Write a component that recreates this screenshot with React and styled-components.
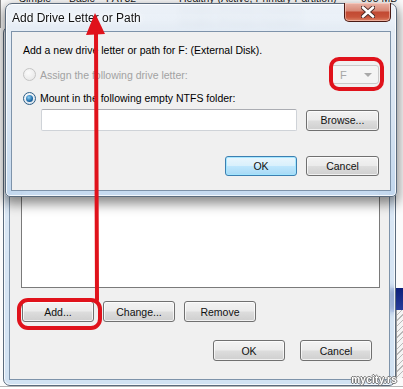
import React from "react";
import styled, { createGlobalStyle, css } from "styled-components";

const GlobalStyle = createGlobalStyle`
  html, body { margin: 0; padding: 0; }
  body {
    width: 403px;
    height: 389px;
    overflow: hidden;
    background: #ffffff;
    font-family: "Liberation Sans", Arial, sans-serif;
  }
`;

const Desktop = styled.div`
  position: relative;
  width: 403px;
  height: 389px;
  overflow: hidden;
  background: #fbfbfb;
`;

/* Disk Management list view sitting behind both dialogs */
const ListView = styled.div`
  position: absolute;
  left: 0;
  top: -8px;
  width: 403px;
  border-left: 1px solid #8c8c8c;
`;

const ListRow = styled.div`
  display: grid;
  grid-template-columns: 50px 37px 73px 182px 1fr;
  padding-left: 18px;
  height: 12px;
  font-size: 10.5px;
  line-height: 12px;
  color: ${(p) => p.$tone || "#1a1a1a"};
  white-space: nowrap;
`;

const SelectedBlock = styled.div`
  position: absolute;
  left: 386px;
  top: 288px;
  width: 17px;
  height: 24px;
  background: linear-gradient(#0c1f7a, #2a3f9e);
`;

const Hatch = styled.div`
  position: absolute;
  left: 396px;
  top: 310px;
  width: 7px;
  height: 68px;
  border-left: 1px solid #9a9a9a;
  background: repeating-linear-gradient(135deg, #f4f4f4 0 3px, #b9b9b9 3px 4px);
`;

const BottomStrip = styled.div`
  position: absolute;
  left: 0;
  right: 0;
  top: 386px;
  height: 3px;
  border-top: 1px solid #b4b4b4;
  background: #ffffff;
`;

/* Windows */
const Window = styled.div`
  position: absolute;
  box-sizing: border-box;
  display: flex;
  flex-direction: column;
  border: 1px solid #5b6b7d;
  backdrop-filter: blur(3px);
  box-shadow: inset 0 0 0 1px rgba(255, 255, 255, 0.75);
`;

const BackWindow = styled(Window)`
  left: 3px;
  top: 26px;
  width: 393px;
  height: 360px;
  padding: 24px 5px 5px 5px;
  border-radius: 7px;
  background: linear-gradient(to bottom, rgba(214, 228, 243, 0.7), rgba(196, 218, 240, 0.75));
`;

const FrontWindow = styled(Window)`
  left: 5px;
  top: 3px;
  width: 392px;
  height: 194px;
  padding: 0 5px 5px 5px;
  border-radius: 7px 7px 5px 5px;
  background: linear-gradient(to bottom, rgba(234, 240, 247, 0.9) 0%, rgba(216, 229, 243, 0.88) 60%, rgba(190, 213, 238, 0.88) 100%);
  box-shadow:
    inset 0 0 0 1px rgba(255, 255, 255, 0.8),
    0 5px 12px 2px rgba(0, 0, 0, 0.45);
`;

const TitleBar = styled.div`
  display: flex;
  justify-content: space-between;
  align-items: flex-start;
  height: 27px;
  padding-left: 1px;
`;

const Title = styled.div`
  margin-top: 7px;
  font-size: 12px;
  line-height: 14px;
  color: #111;
  text-shadow: 0 0 6px #fff, 0 0 3px #fff;
`;

const CloseButton = styled.div`
  display: flex;
  align-items: center;
  justify-content: center;
  width: 47px;
  height: 19px;
  margin-top: -1px;
  box-sizing: border-box;
  border: 1px solid #4a1a14;
  border-top: none;
  border-radius: 0 0 5px 5px;
  background: linear-gradient(to bottom, #e9b3a6 0%, #d88a78 42%, #c24a33 52%, #c8543b 78%, #dc8568 100%);
  box-shadow: inset 0 0 0 1px rgba(255, 220, 210, 0.5);
`;

const Client = styled.div`
  flex: 1;
  display: flex;
  flex-direction: column;
  box-sizing: border-box;
  border: 1px solid #7e93aa;
  background: #f0f0f0;
  font-size: 10.5px;
  color: #000;
`;

const FrontClient = styled(Client)`
  padding: 12px 11px 0 11px;
`;

const BackClient = styled(Client)`
  padding: 0 9px 18px 11px;
`;

const Intro = styled.div`
  line-height: 13px;
`;

const OptionRow = styled.div`
  display: flex;
  align-items: center;
  justify-content: space-between;
  height: ${(p) => p.$h || 14}px;
  margin-top: ${(p) => p.$mt || 0}px;
`;

const RadioLabel = styled.label`
  display: flex;
  align-items: center;
  gap: 4px;
  color: ${(p) => (p.$disabled ? "#a2a2a2" : "#000")};
`;

const Radio = styled.span`
  position: relative;
  width: 11px;
  height: 11px;
  border-radius: 50%;
  border: 1px solid ${(p) => (p.$disabled ? "#c4c4c4" : "#2f5f86")};
  background: ${(p) =>
    p.$disabled
      ? "radial-gradient(circle at 40% 35%, #fbfbfb, #e4e4e4)"
      : "radial-gradient(circle at 40% 35%, #ffffff, #cfdce8)"};
  ${(p) =>
    p.$checked &&
    css`
      &::after {
        content: "";
        position: absolute;
        left: 2px;
        top: 2px;
        width: 7px;
        height: 7px;
        border-radius: 50%;
        background: radial-gradient(circle at 40% 35%, #8fd1f5, #1c6aa8 60%, #0d3f72);
      }
    `}
`;

const Combo = styled.div`
  display: flex;
  align-items: center;
  justify-content: space-between;
  box-sizing: border-box;
  width: 48px;
  height: 19px;
  padding: 0 6px 0 8px;
  border: 1px solid #cacaca;
  border-radius: 3px;
  background: #f4f4f4;
  color: #a6a6a6;
  font-size: 11px;
`;

const ComboArrow = styled.span`
  width: 0;
  height: 0;
  border-left: 4px solid transparent;
  border-right: 4px solid transparent;
  border-top: 4px solid #a9a9a9;
`;

const PathRow = styled.div`
  display: flex;
  align-items: center;
  gap: 9px;
  margin-top: 4px;
  padding-left: 18px;
`;

const TextBox = styled.div`
  box-sizing: border-box;
  width: 256px;
  height: 22px;
  border: 1px solid #cfd3d8;
  border-top-color: #abadb3;
  border-radius: 2px;
  background: #fff;
`;

const ButtonRow = styled.div`
  display: flex;
  justify-content: ${(p) => p.$justify || "flex-start"};
  gap: ${(p) => p.$gap || 9}px;
  margin-top: ${(p) => p.$mt || 0}px;
  padding-left: ${(p) => p.$pl || 0}px;
  padding-right: ${(p) => p.$pr || 0}px;
`;

const Button = styled.div`
  display: flex;
  align-items: center;
  justify-content: center;
  box-sizing: border-box;
  width: ${(p) => p.$w || 72}px;
  height: ${(p) => p.$h || 21}px;
  border: 1px solid #707070;
  border-radius: 3px;
  background: linear-gradient(to bottom, #f3f3f3 0%, #ebebeb 48%, #dddddd 52%, #cfcfcf 100%);
  box-shadow: inset 0 0 0 1px rgba(255, 255, 255, 0.7);
  color: #111;
  font-size: 10.5px;
  ${(p) =>
    p.$primary &&
    css`
      border-color: #3c7fb1;
      background: linear-gradient(to bottom, #eaf6fd 0%, #d9f0fc 48%, #bee6fd 52%, #a7d9f5 100%);
      box-shadow: inset 0 0 0 1px rgba(160, 230, 255, 0.9);
    `}
`;

const ListBox = styled.div`
  flex: 1;
  border: 1px solid #7a7a7a;
  background: #ffffff;
`;

const Watermark = styled.div`
  position: absolute;
  right: 6px;
  bottom: 4px;
  font-size: 10px;
  font-weight: bold;
  letter-spacing: 0.3px;
  color: #ffffff;
  text-shadow: -1px 0 #7a7a7a, 1px 0 #7a7a7a, 0 -1px #7a7a7a, 0 1px #7a7a7a;
`;

const Annotations = styled.svg`
  position: absolute;
  left: 0;
  top: 0;
  pointer-events: none;
`;

const rows = [
  { tone: "#1a1a1a", cells: ["Simple", "Basic", "FAT32", "Healthy (Active, Primary Partition)", "995 MB"] },
  { tone: "#8a95a3", cells: ["", "", "", "Healthy (Primary Partition)", ""] },
  { tone: "#8a95a3", cells: ["", "", "", "Healthy (Primary Partition)", ""] },
];

export default function App() {
  return (
    <>
      <GlobalStyle />
      <Desktop>
        <ListView>
          {rows.map((r, i) => (
            <ListRow key={i} $tone={r.tone}>
              {r.cells.map((c, j) => (
                <span key={j}>{c}</span>
              ))}
            </ListRow>
          ))}
        </ListView>
        <SelectedBlock />
        <Hatch />
        <BottomStrip />

        <BackWindow>
          <BackClient>
            <ListBox />
            <ButtonRow $mt={13} $pl={1}>
              <Button>Add...</Button>
              <Button>Change...</Button>
              <Button>Remove</Button>
            </ButtonRow>
            <ButtonRow $mt={18} $justify="flex-end" $gap={15} $pr={8}>
              <Button>OK</Button>
              <Button>Cancel</Button>
            </ButtonRow>
          </BackClient>
        </BackWindow>

        <FrontWindow>
          <TitleBar>
            <Title>Add Drive Letter or Path</Title>
            <CloseButton>
              <svg width="14" height="12" viewBox="0 0 14 12">
                <path d="M2 1.5 L12 10.5 M12 1.5 L2 10.5" stroke="#4a2a26" strokeWidth="4.4" strokeLinecap="round" />
                <path d="M2 1.5 L12 10.5 M12 1.5 L2 10.5" stroke="#ffffff" strokeWidth="2.6" strokeLinecap="round" />
              </svg>
            </CloseButton>
          </TitleBar>
          <FrontClient>
            <Intro>Add a new drive letter or path for F: (External Disk).</Intro>
            <OptionRow $h={19} $mt={8}>
              <RadioLabel $disabled>
                <Radio $disabled />
                Assign the following drive letter:
              </RadioLabel>
              <Combo>
                F
                <ComboArrow />
              </Combo>
            </OptionRow>
            <OptionRow $mt={7}>
              <RadioLabel>
                <Radio $checked />
                Mount in the following empty NTFS folder:
              </RadioLabel>
            </OptionRow>
            <PathRow>
              <TextBox />
              <Button $w={73}>Browse...</Button>
            </PathRow>
            <ButtonRow $mt={25} $justify="flex-end" $gap={9}>
              <Button $primary $h={20}>OK</Button>
              <Button $w={73} $h={20}>Cancel</Button>
            </ButtonRow>
          </FrontClient>
        </FrontWindow>

        <Watermark>mycity.rs</Watermark>

        <Annotations width="403" height="389" viewBox="0 0 403 389">
          <g fill="none" stroke="#e0121b" strokeWidth="4" strokeLinejoin="round" strokeLinecap="round">
            <rect x="331" y="59" width="51" height="30" rx="8" />
            <rect x="19" y="300" width="81" height="28" rx="9" />
            <path d="M96 32 L97 300" />
          </g>
          <polygon points="95,13 86,35 105,34" fill="#e0121b" />
        </Annotations>
      </Desktop>
    </>
  );
}
